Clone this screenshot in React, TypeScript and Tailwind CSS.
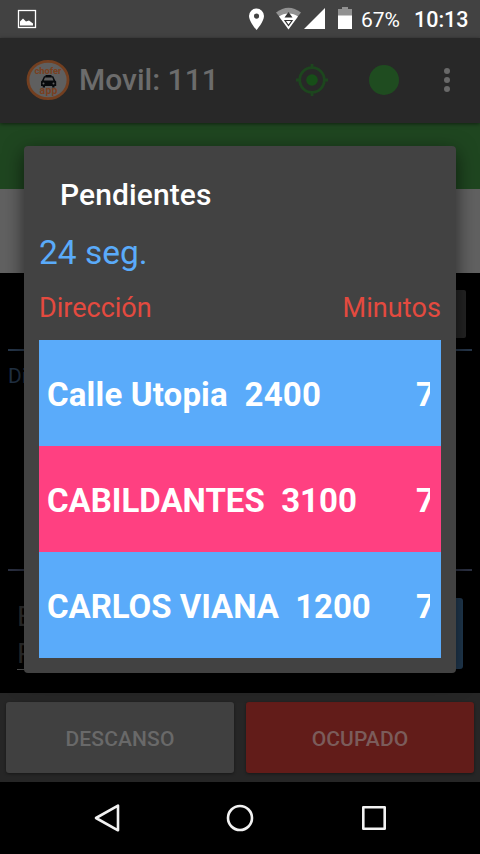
import React from "react";

type Ride = { street: string; number: string; minutes: string; color: string; spacing: string };

const rides: Ride[] = [
  { street: "Calle Utopia", number: "2400", minutes: "7", color: "bg-[#5aabfa]", spacing: "tracking-[0.17px]" },
  { street: "CABILDANTES", number: "3100", minutes: "7", color: "bg-[#ff4081]", spacing: "tracking-normal" },
  { street: "CARLOS VIANA", number: "1200", minutes: "7", color: "bg-[#5aabfa]", spacing: "tracking-[-0.05px]" },
];

function StatusBar() {
  return (
    <header className="flex h-[38px] shrink-0 items-center bg-[#424242] text-white">
      <svg className="ml-[17px] h-[20px] w-[20px]" viewBox="0 0 20 20" fill="none">
        <rect x="1.500" y="1.500" width="17" height="17" stroke="#fff" strokeWidth="1.300" />
        <path d="M3 16.500V12.500L6 9.500L9 12.500L12 11.500L16 14.500V16.500Z" fill="#fff" />
      </svg>
      <svg className="ml-[210px] h-[38px] w-[110px]" viewBox="0 0 110 38">
        <path fillRule="evenodd" fill="#fff" d="M9.500 8.500a7.400 7.400 0 0 0-7.500 7.400C2 21.500 9.500 30 9.500 30S17 21.500 17 15.900A7.400 7.400 0 0 0 9.500 8.500Zm0 5a2.600 2.600 0 1 1 0 5.200a2.600 2.600 0 0 1 0-5.200Z" />
        <path d="M29 12.500Q41.500 3 54 12.500L41.500 28Z" fill="#919191" />
        <path d="M32 16.500Q36 13.500 41.500 13.500T51 16.500L41.500 29.500Z" fill="#fff" />
        <path d="M37.500 17.500L41.500 12L45.500 17.500Z" fill="#333" />
        <path d="M38 20.500H45L41.500 25.500Z" fill="#fff" stroke="#333" strokeWidth="1.200" />
        <path d="M78 8V29H57Z" fill="#fff" />
        <path d="M91 9H95V7H101V9H105V16H91Z" fill="#919191" />
        <path d="M91 15.500H105V29H91Z" fill="#fff" />
      </svg>
      <span className="ml-[4px] w-[53px] whitespace-nowrap pt-[2px] text-[21px] leading-[38px]">67%</span>
      <span className="whitespace-nowrap pt-[2px] text-[21.500px] font-medium leading-[38px]">10:13</span>
    </header>
  );
}

function Logo() {
  return (
    <svg className="ml-[26px] h-[42px] w-[44px] shrink-0" viewBox="0 0 44 42">
      <ellipse cx="22" cy="21" rx="20" ry="18.700" fill="#5f5f5f" stroke="#733f20" strokeWidth="2.800" />
      <text x="22" y="15" textAnchor="middle" fontSize="9.500" fontWeight="700" textLength="27" fill="#7a3f20">chofer</text>
      <text x="22.500" y="35" textAnchor="middle" fontSize="10.500" fontWeight="700" textLength="18" fill="#7a3f20">app</text>
      <path fillRule="evenodd" fill="#07090c" d="M19.500 16h6v1.300h1.700l2 4.200 1 1v4.500h-1.700v1.600h-2.300v-1.600h-7.200v1.600h-2.300v-1.600H15V22.500l1-1 2-4.200h1.500ZM18.900 18.500l-1.100 3h9.600l-1.100-3Zm-1.400 5a1 1 0 1 0 0 2a1 1 0 0 0 0-2Zm10 0a1 1 0 1 0 0 2a1 1 0 0 0 0-2Z" />
    </svg>
  );
}

function AppBar() {
  return (
    <div className="z-10 flex h-[85px] shrink-0 items-center bg-[#282828] pb-[2px] shadow-[0_1px_4px_#0008]">
      <Logo />
      <h1 className="ml-[9px] w-[216px] whitespace-nowrap pt-px text-[30px] font-medium leading-[40px] text-[#6c6c6c]">Movil: 111</h1>
      <svg className="h-[34px] w-[34px]" viewBox="0 0 34 34" fill="none">
        <circle cx="17" cy="17" r="12.300" stroke="#1d461e" strokeWidth="2.800" />
        <path d="M17 1V6M17 28V33M1 17H6M28 17H33" stroke="#1d461e" strokeWidth="2.800" />
        <circle cx="17" cy="17" r="5.800" fill="#174e18" />
      </svg>
      <span className="ml-[40px] h-[30px] w-[30px] rounded-full bg-[#1f4c20]" />
      <div className="ml-[44.500px] flex flex-col gap-[3px]">
        <i className="h-[6px] w-[6px] rounded-full bg-[#696969]" />
        <i className="h-[6px] w-[6px] rounded-full bg-[#696969]" />
        <i className="h-[6px] w-[6px] rounded-full bg-[#696969]" />
      </div>
    </div>
  );
}

function Background() {
  return (
    <main className="flex h-[570px] shrink-0 flex-col bg-black">
      <div className="h-[66px] shrink-0 bg-[#1f4620]" />
      <div className="h-[84px] shrink-0 bg-[#616161]" />
      <div className="mr-[14px] mt-[17px] h-[48px] w-[60px] shrink-0 self-end rounded-[2px] bg-[#242424]" />
      <div className="mx-2 mt-[11px] h-[2px] shrink-0 bg-[#26364a]" />
      <div className="ml-2 mt-[11px] h-[28px] shrink-0 text-[21px] leading-[28px] text-[#223245]">Di</div>
      <div className="mx-2 mt-[179px] h-[2px] shrink-0 bg-[#2b3042]" />
      <div className="ml-[17px] mr-[17px] mt-[27px] flex h-[72px] shrink-0 justify-between">
        <div className="h-[72px] w-[200px] border-b border-[#555] text-[28px] leading-[37px] text-[#303030]">
          <p>E</p>
          <p>P</p>
        </div>
        <div className="h-[71px] w-[80px] rounded-[3px] bg-[#213a52]" />
      </div>
    </main>
  );
}

function ActionButtons() {
  return (
    <div className="flex h-[89px] shrink-0 gap-3 bg-[#262626] px-[6px] pb-[9px] pt-[9px] text-[21px] font-medium text-[#696969]">
      <button className="h-[71px] flex-1 rounded-[3px] bg-[#404040] pt-[5px] tracking-[0.15px] shadow-[0_1px_3px_#0006]">DESCANSO</button>
      <button className="h-[71px] flex-1 rounded-[3px] bg-[#621c19] pt-[5px] tracking-[0.1px] text-[#7b5c5b] shadow-[0_1px_3px_#0006]">OCUPADO</button>
    </div>
  );
}

function NavigationBar() {
  return (
    <nav className="flex h-[72px] shrink-0 items-center justify-center gap-[104px] bg-black">
      <svg className="h-[30px] w-[30px]" viewBox="0 0 30 30" fill="none" stroke="#f2f2f2" strokeWidth="2.600" strokeLinejoin="round">
        <path d="M27 2.700V27.300L5 15Z" />
      </svg>
      <svg className="h-[30px] w-[30px]" viewBox="0 0 30 30" fill="none" stroke="#f2f2f2" strokeWidth="2.600">
        <circle cx="15" cy="15" r="12" />
      </svg>
      <svg className="h-[30px] w-[30px]" viewBox="0 0 30 30" fill="none" stroke="#f2f2f2" strokeWidth="2.600" strokeLinejoin="round">
        <rect x="4.300" y="4.300" width="21.400" height="21.400" />
      </svg>
    </nav>
  );
}

function PendingDialog() {
  return (
    <section role="dialog" className="absolute left-6 top-[146px] z-20 flex h-[527px] w-[432px] flex-col rounded-[4px] bg-[#424242] px-[15px] shadow-[0_6px_20px_#0009]">
      <h2 className="ml-[21px] mt-[29px] h-[40px] whitespace-nowrap text-[30px] font-medium leading-[40px] tracking-[0.1px] text-white">Pendientes</h2>
      <p className="mt-[17px] h-[42px] whitespace-nowrap text-[33.5px] leading-[42px] text-[#5aabfa]">24 seg.</p>
      <div className="mt-[16px] flex h-[36px] justify-between text-[27px] leading-[36px] text-[#e44a3f]">
        <span>Dirección</span>
        <span className="tracking-[0.1px]">Minutos</span>
      </div>
      <ul className="mt-[14px] flex flex-col">
        {rides.map((ride) => (
          <li key={ride.street} className={`flex h-[106px] items-center justify-between pl-2 pr-[11px] pt-[4px] text-[33px] font-bold text-white ${ride.color}`}>
            <span className={`whitespace-pre ${ride.spacing}`}>{ride.street}{"  "}{ride.number}</span>
            <span className="w-[14px] overflow-hidden">{ride.minutes}</span>
          </li>
        ))}
      </ul>
    </section>
  );
}

export default function App() {
  return (
    <div className="relative flex h-[854px] w-[480px] flex-col overflow-hidden bg-black font-[Roboto,sans-serif]">
      <StatusBar />
      <AppBar />
      <Background />
      <ActionButtons />
      <NavigationBar />
      <PendingDialog />
    </div>
  );
}
